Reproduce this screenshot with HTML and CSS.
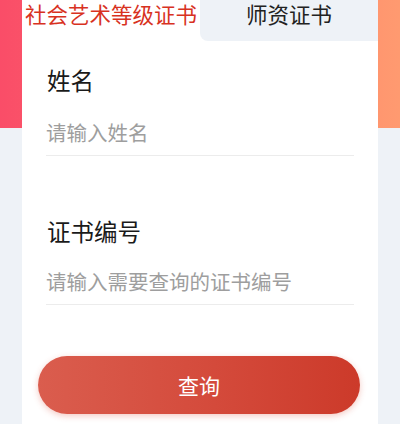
FILE: index.html
```html
<!DOCTYPE html>
<html lang="zh">
<head>
<meta charset="utf-8">
<link rel="stylesheet" href="styles.css">
</head>
<body>
<div class="page">
  <div class="card">
    <div class="tabs">
      <div class="tab tab-active">社会艺术等级证书</div>
      <div class="tab tab-other">师资证书</div>
    </div>
    <div class="form">
      <div class="field field-first">
        <div class="label">姓名</div>
        <div class="input">请输入姓名</div>
      </div>
      <div class="field field-second">
        <div class="label">证书编号</div>
        <div class="input">请输入需要查询的证书编号</div>
      </div>
    </div>
    <div class="btn-row">
      <button class="btn">查询</button>
    </div>
  </div>
</div>
</body>
</html>
```
FILE: styles.css
```css
html, body {
  margin: 0;
  padding: 0;
}
body {
  width: 400px;
  height: 424px;
  overflow: hidden;
  background: #eef2f7;
  font-family: "Noto Sans CJK SC", "Noto Sans", sans-serif;
}
.page {
  height: 424px;
  padding: 0 22px;
  box-sizing: border-box;
  background:
    linear-gradient(90deg, #fa4d68 0%, #fb6a6a 40%, #ff8a6c 75%, #ff9a70 100%) top left / 100% 128px no-repeat,
    #eef2f7;
}
.card {
  background: #fff;
  height: 424px;
  display: flex;
  flex-direction: column;
}
.tabs {
  display: flex;
  height: 41px;
}
.tab {
  display: flex;
  align-items: flex-start;
  justify-content: center;
  font-size: 21.5px;
  line-height: 27px;
  white-space: nowrap;
}
.tab-active {
  width: 178px;
  color: #d8321f;
  background: #fff;
}
.tab-other {
  flex: 1;
  color: #222;
  background: #eef2f7;
  border-bottom-left-radius: 8px;
}
.form {
  padding: 0 24px;
}
.field-first {
  margin-top: 23px;
}
.field-second {
  margin-top: 59px;
}
.label {
  font-size: 23.5px;
  line-height: 32px;
  color: #1a1a1a;
  padding-left: 1px;
}
.input {
  margin-top: 21px;
  font-size: 20.5px;
  line-height: 30px;
  color: #9e9e9e;
  padding-bottom: 8px;
  border-bottom: 1px solid #ececec;
}
.field-second .input {
  margin-top: 19px;
}
.btn-row {
  padding: 0 18px 0 16px;
  margin-top: 51px;
}
.btn {
  display: block;
  width: 100%;
  height: 58px;
  border: none;
  border-radius: 29px;
  background: linear-gradient(90deg, #da5d4e 0%, #d44a3b 55%, #cc3a2a 100%);
  box-shadow: 0 2px 6px rgba(220, 80, 60, 0.3);
  color: #fff;
  font-family: "Noto Sans CJK SC", "Noto Sans", sans-serif;
  font-size: 21px;
}
```
